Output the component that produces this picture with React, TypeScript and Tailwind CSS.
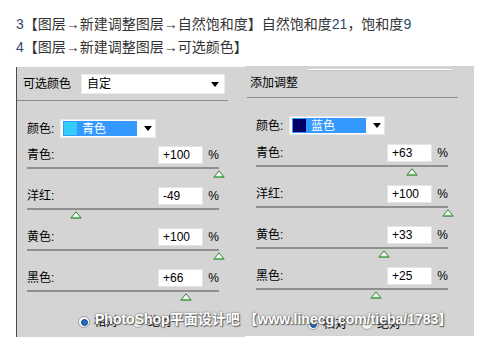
import React from 'react';

const CJK = { fontFamily: '"Liberation Sans", "Noto Sans CJK SC", sans-serif' };

interface Adjust {
  label: string;
  value: number;
}

const Thumb: React.FC<{ value: number }> = ({ value }) => (
  <svg
    className="absolute top-[3px]"
    style={{ left: `${((value + 100) / 200) * 192 - 6}px` }}
    width="12"
    height="8"
    viewBox="0 0 12 8"
  >
    <polygon points="6,0.8 11.2,7.2 0.8,7.2" fill="#f4fbf4" stroke="#3b7d3b" strokeWidth="1" />
    <line x1="2" y1="6.5" x2="10" y2="6.5" stroke="#5fc35f" strokeWidth="1.2" />
  </svg>
);

const SliderRow: React.FC<Adjust> = ({ label, value }) => (
  <div className="flex flex-col w-[192px]">
    <div className="flex items-center h-[18px]">
      <span className="text-[12px] text-black w-[133px]">{label}:</span>
      <div className="w-[46px] h-[18px] bg-white border border-[#e4e4e4] flex items-center pl-[4px] text-[12px] text-black leading-none">
        {value > 0 ? `+${value}` : `${value}`}
      </div>
      <span className="ml-[5px] text-[12px] text-black">%</span>
    </div>
    <div className="relative h-[13px] mt-[3px]">
      <div className="h-[2px] bg-[#8f8f8f] w-full" />
      <Thumb value={value} />
    </div>
  </div>
);

const ColorSelect: React.FC<{ swatch: string; name: string }> = ({ swatch, name }) => (
  <div className="flex items-center">
    <span className="text-[12px] text-black w-[33px]">颜色:</span>
    <div className="w-[96px] h-[19px] bg-white border border-[#e8e8e8] flex items-center px-[2px]">
      <div className="flex items-center w-[74px] h-[15px] bg-[#3399ff] pl-[1px]">
        <div className="w-[13px] h-[13px]" style={{ background: swatch }} />
        <span className="ml-[5px] text-[12px] text-white leading-none">{name}</span>
      </div>
      <svg className="ml-[7px]" width="8" height="5" viewBox="0 0 8 5">
        <polygon points="0,0 8,0 4,5" fill="#000" />
      </svg>
    </div>
  </div>
);

const Radios: React.FC = () => (
  <div className="flex items-center h-[14px] text-[12px] text-black ml-[51px]">
    <span className="w-[12px] h-[12px] rounded-full border border-[#9a9a9a] bg-white flex items-center justify-center">
      <span className="w-[7px] h-[7px] rounded-full bg-[#1f6fc4] border border-[#0b3f7a]" />
    </span>
    <span className="ml-[4px]">相对</span>
    <span className="ml-[14px] w-[12px] h-[12px] rounded-full border border-[#a8a8a8] bg-[#f4f4f4]" />
    <span className="ml-[4px]">绝对</span>
  </div>
);

const leftRows: Adjust[] = [
  { label: '青色', value: 100 },
  { label: '洋红', value: -49 },
  { label: '黄色', value: 100 },
  { label: '黑色', value: 66 },
];

const rightRows: Adjust[] = [
  { label: '青色', value: 63 },
  { label: '洋红', value: 100 },
  { label: '黄色', value: 33 },
  { label: '黑色', value: 25 },
];

export default function App() {
  return (
    <div className="w-[503px] h-[337px] bg-white overflow-hidden relative" style={CJK}>
      <div className="pl-[16px] pt-[13px] text-[14px] text-[#333] leading-[23px]">
        <div>
          <span className="text-[#2b4a6b]">3</span>【图层→新建调整图层→自然饱和度】自然饱和度
          <span className="text-[#2b4a6b]">21</span>，饱和度<span className="text-[#2b4a6b]">9</span>
        </div>
        <div>
          <span className="text-[#2b4a6b]">4</span>【图层→新建调整图层→可选颜色】
        </div>
      </div>

      <div className="flex mt-[8px] ml-[16px] h-[270px]">
        {/* left panel */}
        <div className="w-[229px] h-full bg-[#d4d4d4] border-l border-[#4a4a4a] flex flex-col">
          <div className="flex items-center h-[33px] pt-[1px]">
            <span className="ml-[6px] text-[12px] text-black">可选颜色</span>
            <div className="ml-[10px] w-[144px] h-[20px] bg-white border border-[#ececec] flex items-center justify-between px-[5px]">
              <span className="text-[12px] text-black">自定</span>
              <svg width="8" height="5" viewBox="0 0 8 5">
                <polygon points="0,0 8,0 4,5" fill="#000" />
              </svg>
            </div>
          </div>
          <div className="h-px bg-[#8c8c8c] w-[211px]" />
          <div className="pl-[10px] mt-[18px]">
            <ColorSelect swatch="#33ccff" name="青色" />
            <div className="flex flex-col gap-[7px] mt-[8px]">
              {leftRows.map((r) => (
                <SliderRow key={r.label} {...r} />
              ))}
            </div>
            <div className="mt-[12px]">
              <Radios />
            </div>
          </div>
        </div>

        {/* right panel */}
        <div className="w-[229px] h-full bg-[#d4d4d4] flex flex-col -mt-px">
          <div className="relative h-[31px] flex items-center">
            <div className="absolute top-[3px] left-[63px] w-[144px] h-[2px] bg-white border-b border-[#c4c4c4]" />
            <span className="ml-[5px] mt-[2px] text-[12px] text-black">添加调整</span>
          </div>
          <div className="h-px bg-[#8c8c8c] w-[211px] ml-[2px]" />
          <div className="pl-[11px] mt-[18px]">
            <ColorSelect swatch="#000066" name="蓝色" />
            <div className="flex flex-col gap-[7px] mt-[9px]">
              {rightRows.map((r) => (
                <SliderRow key={r.label} {...r} />
              ))}
            </div>
            <div className="mt-[16px]">
              <Radios />
            </div>
          </div>
        </div>
      </div>

      <div
        className="absolute left-[95px] top-[309px] text-[14px] font-bold text-white whitespace-nowrap"
        style={{ ...CJK, textShadow: '0 0 2px #555, 1px 1px 1px #666' }}
      >
        PhotoShop平面设计吧 【www.linecg.com/tieba/1783】
      </div>
    </div>
  );
}
